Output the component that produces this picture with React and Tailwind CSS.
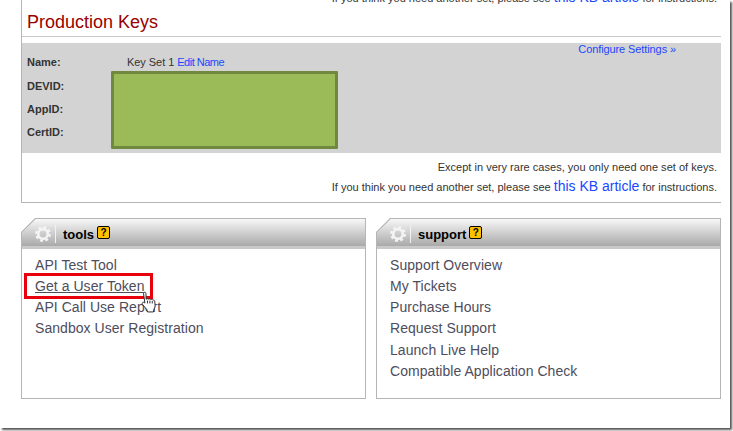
const tools = ["API Test Tool", "Get a User Token", "API Call Use Report", "Sandbox User Registration"];
const support = ["Support Overview", "My Tickets", "Purchase Hours", "Request Support", "Launch Live Help", "Compatible Application Check"];

function Gear() {
  return (
    <svg width="16" height="16" viewBox="0 0 18 18" className="shrink-0">
      <circle cx="9" cy="9" r="5.4" fill="none" stroke="#f4f4f4" strokeWidth="3" />
      <circle cx="9" cy="9" r="7.6" fill="none" stroke="#f4f4f4" strokeWidth="2.6" strokeDasharray="3.2 2.8" />
    </svg>
  );
}

function Hand() {
  return (
    <svg width="17" height="23" viewBox="0 0 18 24" className="absolute left-[140px] top-[291px]">
      <path
        d="M4 1.500c1-.8 2.200-.2 2.300 1l.2 6 1-.5c.8-.3 1.500 0 1.800.5.7-.5 1.700-.3 2.100.4.8-.5 1.800-.2 2.200.6.8-.3 1.800.2 2 1.200l.4 4.300c.1 1.500-.4 2.800-1.200 4l-.6 3H8l-.8-2.500L3 14.500c-.8-1-1-2 0-2.600.8-.4 1.400 0 2.200.7L3.800 3c-.1-.6-.1-1.100.2-1.500z"
        fill="#fff"
        stroke="#222"
        strokeWidth="1"
        strokeLinejoin="round"
      />
      <path d="M8 10v3M10.500 10v3M13 10.500v2.500" stroke="#222" strokeWidth="1" fill="none" />
    </svg>
  );
}

function Panel({ title, items, highlight }) {
  return (
    <div className="w-[345px] h-[181px] p-px bg-[#b5b5b5] [clip-path:polygon(14px_0,100%_0,100%_100%,0_100%,0_14px)]">
      <div className="h-full bg-white flex flex-col [clip-path:polygon(14px_0,100%_0,100%_100%,0_100%,0_14px)]">
        <div className="h-[30px] pt-[3px] shrink-0 flex items-center pl-[13px] bg-gradient-to-b from-[#f8f8f8] to-[#a9a9a9] border-b-[3px] border-[#c9c9c9]">
          <Gear />
          <div className="w-px h-[18px] bg-[#f2f2f2] ml-[4px] mr-[7px]" />
          <span className="text-[13px] font-bold text-black leading-none">{title}</span>
          <span className="ml-[3px] w-[13px] h-[13px] -mt-[3px] rounded-[2px] bg-[#ffc000] border border-black flex items-center justify-center text-[10px] font-bold leading-none text-black">
            ?
          </span>
        </div>
        <ul className="pl-[13px] pt-[6px] text-[14px] tracking-[0.05px] leading-[21px] text-[#4d4d5c]">
          {items.map((item) => (
            <li key={item} className={item === "Launch Live Help" ? "mt-px" : ""}>
              {item === highlight ? <span className="underline">{item}</span> : item}
            </li>
          ))}
        </ul>
      </div>
    </div>
  );
}

export default function App() {
  return (
    <div className="w-[733px] h-[431px] bg-white overflow-hidden font-['Liberation_Sans',Arial,sans-serif] relative">
      <div className="w-[730px] h-[428px] bg-white shadow-[2px_2px_2px_#555] pl-[21px]">
        <div className="w-[700px] h-[203px] border-l border-b border-[#b5b5b5] flex flex-col">
          <div className="h-[4px] overflow-hidden flex flex-col justify-end items-end pr-[4px] shrink-0">
            <p className="text-[11px] leading-[12px] text-[#333] whitespace-nowrap shrink-0">
              If you think you need another set, please see{" "}
              <a className="text-[14px] leading-[12px] text-[#1a47ff]">this KB article</a> for instructions.
            </p>
          </div>
          <div className="h-[33px] border-b border-[#c8c8c8] pl-[5px] text-[18px] leading-[36px] text-[#990000] shrink-0">
            Production Keys
          </div>
          <div className="relative mt-[6px] h-[110px] bg-[#d3d3d3] shrink-0 pl-[5px] text-[11px] text-[#333]">
            <a className="absolute right-[45px] top-0 text-[11px] tracking-[-0.1px] leading-[13px] text-[#1a47ff]">Configure Settings »</a>
            <div className="flex items-center h-[14px] mt-[12px]">
              <b className="w-[100px]">Name:</b>
              <span className="mt-px tracking-[-0.05px]">
                Key Set 1 <a className="text-[#1a47ff] tracking-[-0.5px]">Edit Name</a>
              </span>
            </div>
            <div className="mt-[10px] leading-[14px] font-bold">DEVID:</div>
            <div className="mt-[9px] leading-[14px] font-bold">AppID:</div>
            <div className="mt-[9px] leading-[14px] font-bold">CertID:</div>
            <div className="absolute left-[89px] top-[28px] w-[227px] h-[78px] bg-[#9bbb59] border-[3px] border-[#71893f] rounded-[1px]" />
          </div>
          <div className="pr-[4px] text-right text-[11px] text-[#333]">
            <p className="mt-[7px] leading-[14px] tracking-[0.02px]">Except in very rare cases, you only need one set of keys.</p>
            <p className="mt-[3px] leading-[18px]">
              If you think you need another set, please see{" "}
              <a className="text-[14px] text-[#1a47ff]">this KB article</a> for instructions.
            </p>
          </div>
        </div>
        <div className="flex gap-[10px] mt-[15px] w-[700px]">
          <Panel title="tools" items={tools} highlight="Get a User Token" />
          <Panel title="support" items={support} />
        </div>
      </div>
      <div className="absolute left-[24px] top-[273px] w-[129px] h-[26px] border-[3px] border-[#e8000c]" />
      <Hand />
    </div>
  );
}
